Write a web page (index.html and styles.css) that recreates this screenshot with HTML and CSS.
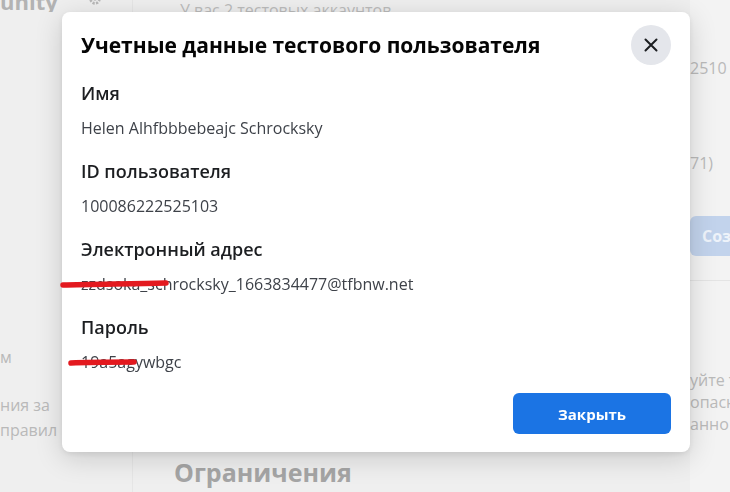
FILE: index.html
```html
<!DOCTYPE html>
<html lang="ru">
<head>
    <meta charset="UTF-8">
    <meta name="viewport" content="width=device-width, initial-scale=1.0">
    <title>Учетные данные тестового пользователя</title>
    <link rel="stylesheet" href="styles.css">
</head>
<body>
    <!-- Page behind the dialog (dimmed) -->
    <div class="page">
        <aside class="sidebar">
            <div class="side-top">
                <span class="brand">unity</span>
                <svg class="gear" width="14" height="14" viewBox="0 0 16 16">
                    <circle cx="8" cy="8" r="5" fill="none" stroke="#b8b8b8" stroke-width="3" stroke-dasharray="2.5 1.5"/>
                    <circle cx="8" cy="8" r="2" fill="#b8b8b8"/>
                </svg>
            </div>
            <div class="side-text">
                <p class="side-line first">м</p>
                <p class="side-line gap">ния за</p>
                <p class="side-line">правил</p>
            </div>
        </aside>

        <main class="main">
            <p class="accounts">У вас 2 тестовых аккаунтов</p>
            <div class="main-bottom">
                <h2 class="limits">Ограничения</h2>
            </div>
        </main>

        <div class="aside">
            <p class="aside-line id-line">2510</p>
            <p class="aside-line count-line">71)</p>
            <div class="aside-btn">Соз</div>
            <div class="aside-rule"></div>
            <p class="aside-line tip first">уйте т</p>
            <p class="aside-line tip">опасн</p>
            <p class="aside-line tip">анно</p>
        </div>
    </div>

    <!-- Dialog -->
    <div class="dialog">
        <div class="dialog-header">
            <h1>Учетные данные тестового пользователя</h1>
            <button class="close-btn" aria-label="Закрыть">
                <svg width="14" height="14" viewBox="0 0 14 14">
                    <path d="M1.5 1.5 L12.5 12.5 M12.5 1.5 L1.5 12.5" stroke="#1c1e21" stroke-width="2" stroke-linecap="round"/>
                </svg>
            </button>
        </div>

        <div class="dialog-body">
            <div class="field">
                <div class="field-label">Имя</div>
                <div class="field-value">Helen Alhfbbbebeajc Schrocksky</div>
            </div>
            <div class="field">
                <div class="field-label">ID пользователя</div>
                <div class="field-value">100086222525103</div>
            </div>
            <div class="field">
                <div class="field-label">Электронный адрес</div>
                <div class="field-value">
                    zzdsoka_schrocksky_1663834477@tfbnw.net
                    <svg class="scribble email" width="110" height="12" viewBox="0 0 110 12">
                        <path d="M3 7 C 30 6, 70 6, 106 5" stroke="#e3191f" stroke-width="5.5" stroke-linecap="round" fill="none"/>
                    </svg>
                </div>
            </div>
            <div class="field">
                <div class="field-label">Пароль</div>
                <div class="field-value">19a5agywbgc
                    <svg class="scribble pass" width="70" height="12" viewBox="0 0 70 12">
                        <path d="M3 7 C 20 6, 45 6, 66 6" stroke="#e3191f" stroke-width="5.5" stroke-linecap="round" fill="none"/>
                    </svg>
                </div>
            </div>
        </div>

        <div class="dialog-footer">
            <button class="primary-btn">Закрыть</button>
        </div>
    </div>
</body>
</html>
```

FILE: styles.css
```css
/* General Page Styling */
body {
    font-family: "Open Sans", "Noto Sans", Arial, sans-serif;
    background-color: #efefef;
    color: #1c1e21;
    margin: 0;
    padding: 0;
    height: 492px;
    overflow: hidden;
}

p, h1, h2 {
    margin: 0;
}

/* Dimmed page behind the dialog */
.page {
    display: grid;
    grid-template-columns: 133px 557px 1fr;
    height: 492px;
    color: #b9b9b9;
    font-size: 16px;
}

.sidebar {
    border-right: 1px solid #e6e6e6;
}

.side-top {
    display: flex;
    align-items: flex-start;
    gap: 30px;
    height: 12px;
    overflow: hidden;
}

.brand {
    font-size: 22px;
    font-weight: 700;
    line-height: 14px;
    color: #b3b3b3;
    margin-top: -6px;
}

.gear {
    margin-top: -8px;
}

.side-text {
    padding-top: 333px;
}

.side-line {
    line-height: 25px;
}

.side-line.gap {
    margin-top: 23px;
}

.main {
    display: flex;
    flex-direction: column;
    justify-content: space-between;
    padding-left: 47px;
}

.accounts {
    line-height: 22px;
    font-size: 16px;
    margin-top: -1px;
    color: #bcbcbc;
}

.main-bottom {
    padding-bottom: 5px;
}

.limits {
    font-size: 25px;
    font-weight: 700;
    color: #a5a5a5;
    line-height: 30px;
    margin-left: -6px;
}

.aside {
    background-color: #f3f3f3;
    overflow: hidden;
    white-space: nowrap;
}

.aside-line {
    line-height: 24px;
    color: #bababa;
}

.id-line {
    margin-top: 56px;
}

.count-line {
    margin-top: 71px;
}

.aside-btn {
    margin-top: 41px;
    height: 40px;
    line-height: 40px;
    padding-left: 12px;
    background-color: #c2d3ec;
    color: #eef3fa;
    font-weight: 700;
    border-radius: 6px 0 0 6px;
}

.aside-rule {
    margin-top: 24px;
    border-top: 1px solid #e4e4e4;
}

.tip.first {
    margin-top: 88px;
}

.tip {
    line-height: 22px;
}

/* Dialog */
.dialog {
    position: fixed;
    top: 12px;
    left: 62px;
    width: 628px;
    box-sizing: border-box;
    padding: 13px 19px 18px 19px;
    background-color: #fff;
    border-radius: 8px;
    box-shadow: 0 6px 28px rgba(0, 0, 0, 0.16), 0 2px 6px rgba(0, 0, 0, 0.08);
}

.dialog-header {
    display: flex;
    align-items: center;
    justify-content: space-between;
}

.dialog-header h1 {
    font-size: 21px;
    font-weight: 700;
    color: #050505;
}

.close-btn {
    width: 40px;
    height: 40px;
    border: none;
    border-radius: 50%;
    background-color: #e4e6eb;
    display: flex;
    align-items: center;
    justify-content: center;
    padding: 0;
    cursor: pointer;
}

.dialog-body {
    margin-top: 16px;
}

.field {
    margin-bottom: 19px;
}

.field-label {
    font-size: 18px;
    font-weight: 600;
    line-height: 24px;
    margin-bottom: 11px;
    color: #1c1e21;
}

.field-value {
    position: relative;
    font-size: 16px;
    line-height: 24px;
    color: #3e4249;
}

/* red marker strokes over hidden data */
.scribble {
    position: absolute;
}

.scribble.email {
    left: -21px;
    top: 6px;
}

.scribble.pass {
    left: -13px;
    top: 6px;
}

.dialog-footer {
    display: flex;
    justify-content: flex-end;
    margin-top: 12px;
}

.primary-btn {
    width: 158px;
    height: 41px;
    border: none;
    border-radius: 6px;
    background-color: #1b74e4;
    color: #fff;
    font-family: inherit;
    font-size: 15px;
    font-weight: 700;
    cursor: pointer;
}
```
